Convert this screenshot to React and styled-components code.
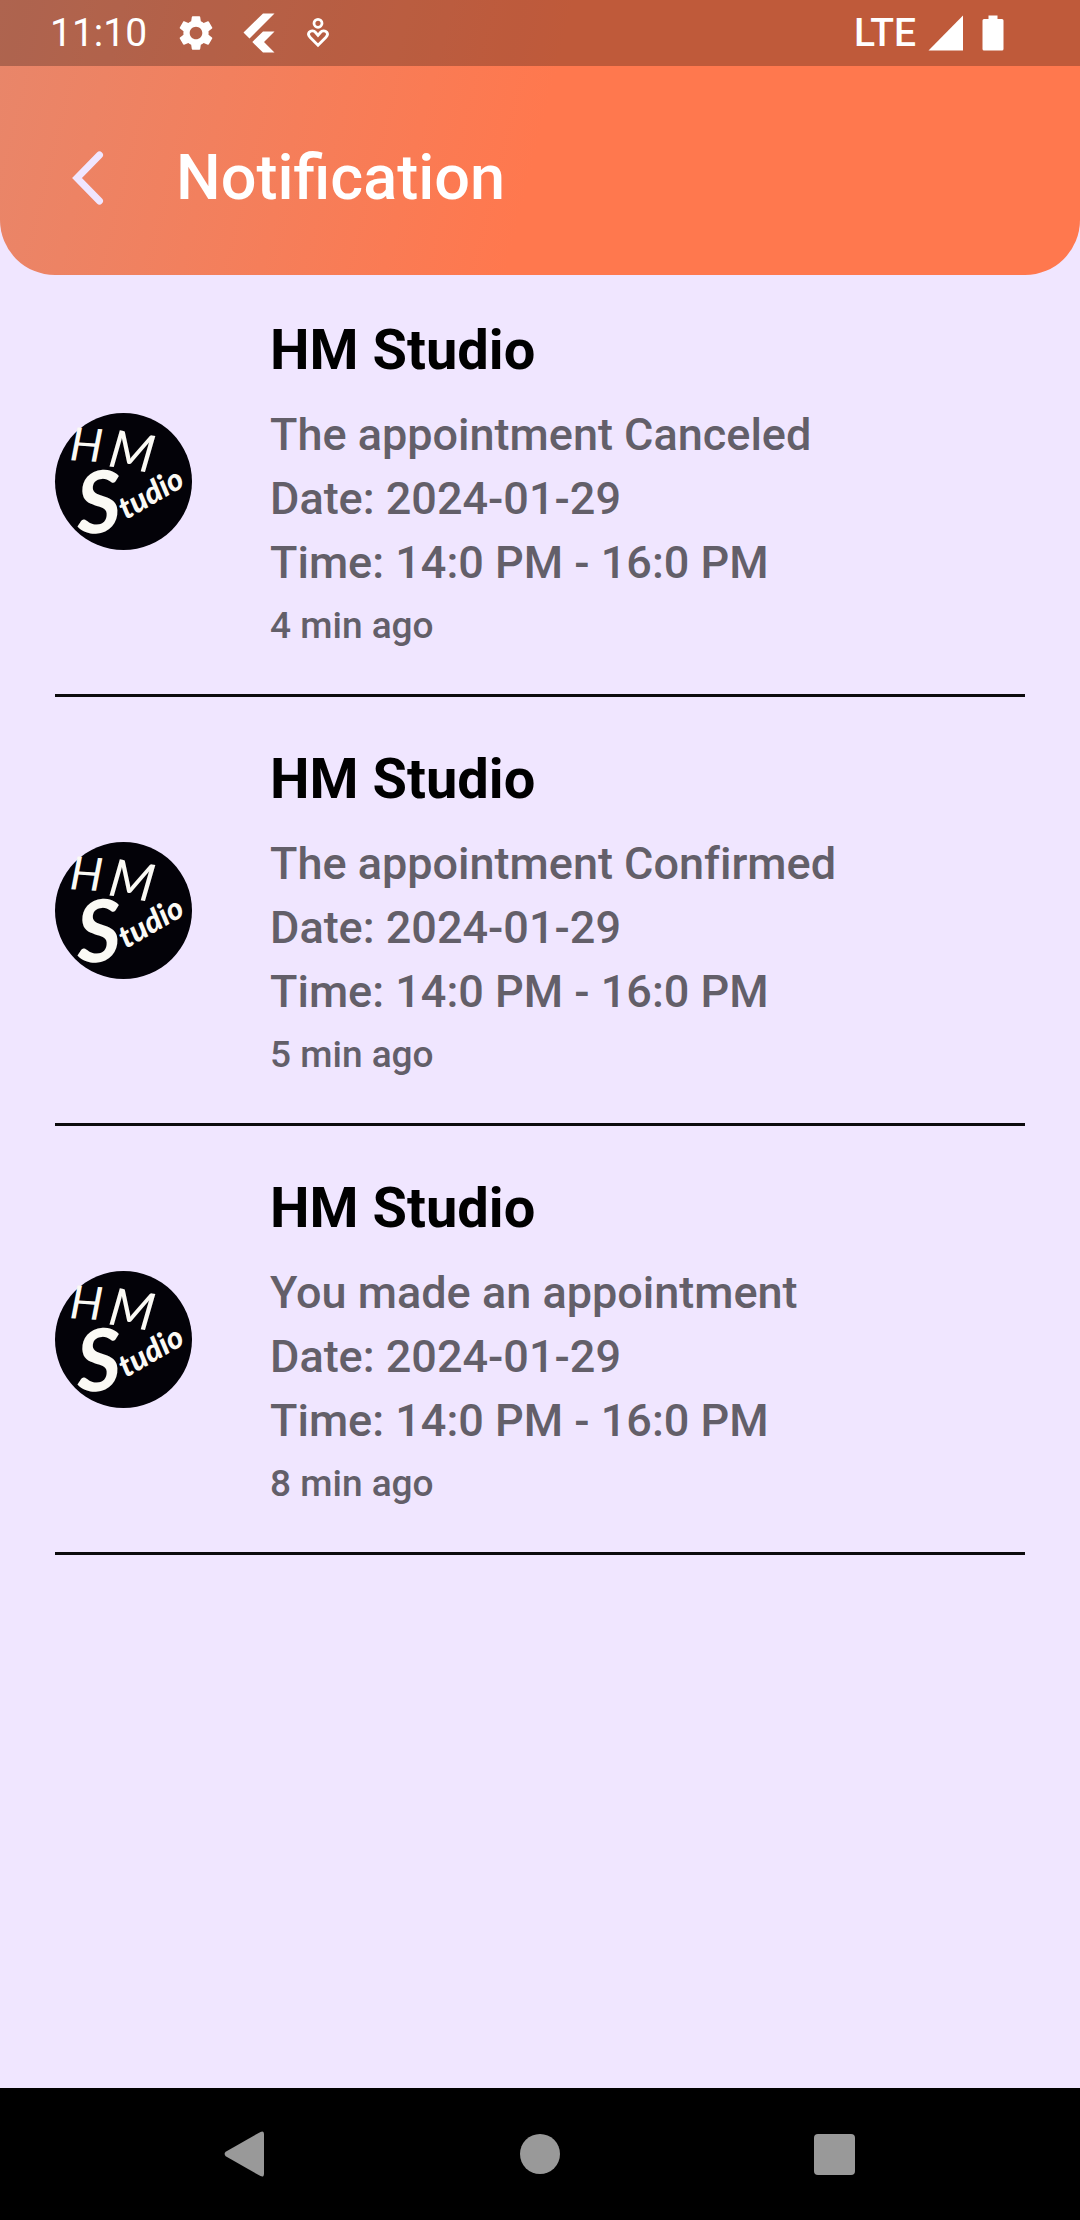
import React from "react";
import styled, { createGlobalStyle } from "styled-components";
import { MdSettings } from "react-icons/md";

const GlobalStyle = createGlobalStyle`
  *, *::before, *::after { box-sizing: border-box; }
  body {
    margin: 0;
    background: #f0e6ff;
    font-family: Roboto, "Noto Sans", sans-serif;
  }
  svg { display: block; flex: none; overflow: visible; }
`;

const Screen = styled.div`
  display: flex;
  flex-direction: column;
  min-height: 100vh;
`;

const Header = styled.header`
  background: linear-gradient(104deg, #e8866a 0%, #ff784e 50%);
  border-radius: 0 0 55px 55px;
  overflow: hidden;
`;

const StatusBar = styled.div`
  display: flex;
  align-items: center;
  justify-content: space-between;
  height: 66px;
  padding: 0 76px 0 50px;
  background: rgba(0, 0, 0, 0.25);
  color: #fff;
`;

const StatusGroup = styled.div`
  display: flex;
  align-items: center;
  gap: ${(p) => p.$gap}px;
`;

const StatusText = styled.span`
  font-size: 39px;
  line-height: 46px;
  font-weight: ${(p) => p.$weight || 400};
`;

const TitleBar = styled.div`
  display: flex;
  align-items: center;
  gap: 40px;
  height: 209px;
  padding: 14px 40px 0;
`;

const IconButton = styled.button`
  display: grid;
  place-items: center;
  width: ${(p) => p.$size}px;
  height: ${(p) => p.$size}px;
  padding: 0;
  border: 0;
  background: none;
  color: ${(p) => p.$color};
  cursor: pointer;
`;

const Title = styled.h1`
  margin: 0;
  color: #fff;
  font-size: 63px;
  line-height: 76px;
  font-weight: 500;
`;

const List = styled.ul`
  flex: 1;
  margin: -7px 0 0;
  padding: 0 55px;
  list-style: none;
`;

const Item = styled.li`
  display: flex;
  align-items: center;
  gap: 78px;
  padding: 38px 0 37px;
  border-bottom: 3px solid #0c0b0d;
`;

const Details = styled.div`
  flex: 1;
  min-width: 0;
  padding-top: 12px;
  color: #635f69;
  font-weight: 500;
  font-variant-ligatures: none;
`;

const Name = styled.h2`
  margin: 0 0 21px;
  color: #000;
  font-size: 56px;
  line-height: 64px;
  font-weight: 700;
`;

const Line = styled.p`
  margin: 0;
  font-size: 45px;
  line-height: 64px;
`;

const Ago = styled.p`
  margin: 0;
  font-size: 37px;
  line-height: 62px;
`;

const NavBar = styled.nav`
  display: flex;
  justify-content: center;
  gap: 162px;
  height: 132px;
  background: #000;
`;

const FlutterIcon = () => (
  <svg width="32" height="40" viewBox="2 0 32 40" fill="currentColor" aria-hidden="true">
    <path d="M20 0.5H31.5L6.5 25.5L0.5 19.5ZM20 18.5H31.5L21 29L31.5 39.5H20L9.3 29Z" />
  </svg>
);

const CareIcon = () => (
  <svg width="26" height="32" viewBox="-2 -1 26 32" fill="none" stroke="currentColor" strokeWidth="2.8" aria-hidden="true">
    <circle cx="11" cy="5.3" r="4" />
    <path d="M11 27.2L3.3 19.6C1.4 17.6 1.1 15.5 2.2 14.2C4 12.2 7 12.6 8.6 14.5L11 17.4L13.4 14.5C15 12.6 18 12.2 19.8 14.2C20.9 15.5 20.6 17.6 18.7 19.6Z" />
  </svg>
);

const SignalIcon = () => (
  <svg width="36" height="36" viewBox="0 0 36 36" fill="currentColor" aria-hidden="true">
    <path d="M0.5 35.5L35 0.5V35.5Z" />
  </svg>
);

const BatteryIcon = () => (
  <svg width="22" height="36" viewBox="0 0 22 36" fill="currentColor" aria-hidden="true">
    <path d="M6.5 0.5H15.5V4H20Q21.5 4 21.5 5.5V34Q21.5 35.5 20 35.5H2Q0.5 35.5 0.5 34V5.5Q0.5 4 2 4H6.5Z" />
  </svg>
);

const ChevronIcon = () => (
  <svg width="34" height="54" viewBox="0 0 34 54" fill="none" stroke="currentColor" strokeWidth="7" strokeLinecap="round" aria-hidden="true">
    <path d="M28.5 4L6 27L28.5 50" strokeLinejoin="miter" />
  </svg>
);

const StudioLogo = () => (
  <svg width="137" height="137" viewBox="0 0 137 137" role="img" aria-label="HM Studio logo">
    <circle cx="68.5" cy="68.5" r="68.5" fill="#030208" />
    <g fill="#fbfaf5" fontFamily="Lato, sans-serif" fontStyle="italic">
      <text x="14" y="47" fontSize="46" transform="rotate(4 14 47)">H</text>
      <text x="52" y="53" fontSize="52" transform="rotate(9 52 53)">M</text>
      <text x="23" y="121" fontSize="86" fontWeight="700" transform="rotate(-3 23 121)">S</text>
      <text x="71" y="107" fontSize="31" fontWeight="900" transform="rotate(-30 71 107)">tudio</text>
    </g>
  </svg>
);

const notifications = [
  { id: 1, message: "The appointment Canceled", ago: "4 min ago" },
  { id: 2, message: "The appointment Confirmed", ago: "5 min ago" },
  { id: 3, message: "You made an appointment", ago: "8 min ago" },
];

function Notification({ message, ago }) {
  return (
    <Item>
      <StudioLogo />
      <Details>
        <Name>HM Studio</Name>
        <Line>{message}</Line>
        <Line>Date: 2024-01-29</Line>
        <Line>Time: 14:0 PM - 16:0 PM</Line>
        <Ago>{ago}</Ago>
      </Details>
    </Item>
  );
}

export default function App() {
  return (
    <Screen>
      <GlobalStyle />
      <Header>
        <StatusBar>
          <StatusGroup $gap={28}>
            <StatusText>11:10</StatusText>
            <MdSettings size={42} aria-hidden="true" />
            <FlutterIcon />
            <CareIcon />
          </StatusGroup>
          <StatusGroup $gap={18}>
            <StatusGroup $gap={12}>
              <StatusText $weight={500}>LTE</StatusText>
              <SignalIcon />
            </StatusGroup>
            <BatteryIcon />
          </StatusGroup>
        </StatusBar>
        <TitleBar>
          <IconButton type="button" aria-label="Back" $size={96} $color="#f0e6ff">
            <ChevronIcon />
          </IconButton>
          <Title>Notification</Title>
        </TitleBar>
      </Header>
      <List>
        {notifications.map((n) => (
          <Notification key={n.id} message={n.message} ago={n.ago} />
        ))}
      </List>
      <NavBar aria-label="System">
        <IconButton type="button" aria-label="Back" $size={132} $color="#999">
          <svg width="44" height="46" viewBox="0 0 44 46" fill="currentColor">
            <path d="M1.7 20.8L36.5 0.9Q40 -0.8 40 3.5V42.5Q40 46.8 36.5 45.1L1.7 25.2Q-0.5 23 1.7 20.8Z" />
          </svg>
        </IconButton>
        <IconButton type="button" aria-label="Home" $size={132} $color="#999">
          <svg width="40" height="40" viewBox="0 0 40 40" fill="currentColor">
            <circle cx="20" cy="20" r="20" />
          </svg>
        </IconButton>
        <IconButton type="button" aria-label="Recent apps" $size={132} $color="#999">
          <svg width="41" height="41" viewBox="0 0 41 41" fill="currentColor">
            <rect width="41" height="41" rx="4" />
          </svg>
        </IconButton>
      </NavBar>
    </Screen>
  );
}
